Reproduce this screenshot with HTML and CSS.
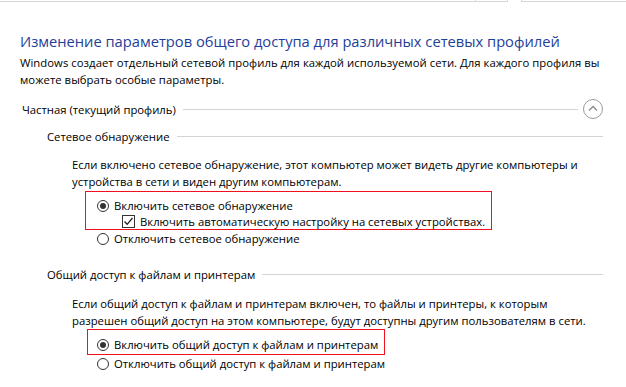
FILE: index.html
```html
<!DOCTYPE html>
<html lang="ru">
<head>
<meta charset="utf-8">
<title>Дополнительные параметры общего доступа</title>
<link rel="stylesheet" href="styles.css">
</head>
<body>
<div class="topbar">
  <div class="address"><span class="address-btn"></span></div>
  <div class="search"></div>
</div>
<main class="content">
  <h1 class="title">Изменение параметров общего доступа для различных сетевых профилей</h1>
  <p class="intro">Windows создает отдельный сетевой профиль для каждой используемой сети. Для каждого профиля вы<br>можете выбрать особые параметры.</p>

  <section class="profile">
    <div class="profile-head">
      <span class="profile-name">Частная (текущий профиль)</span>
      <span class="rule"></span>
      <span class="collapse" aria-label="Свернуть">
        <svg width="20" height="20" viewBox="0 0 20 20"><circle cx="10" cy="10" r="9.5" fill="none" stroke="#9a9a9a" stroke-width="1"/><path d="M6 11.5 L10 7.5 L14 11.5" fill="none" stroke="#8a8a8a" stroke-width="1.3"/></svg>
      </span>
    </div>

    <div class="group">
      <div class="group-head"><span>Сетевое обнаружение</span><span class="rule"></span></div>
      <p class="desc">Если включено сетевое обнаружение, этот компьютер может видеть другие компьютеры и<br>устройства в сети и виден другим компьютерам.</p>
      <div class="options">
        <div class="highlight">
          <div class="opt"><span class="radio checked"></span>Включить сетевое обнаружение</div>
          <div class="opt opt-sub"><span class="check"><svg width="13" height="13" viewBox="0 0 13 13"><path d="M2.5 6.5 L5.2 9.3 L10.5 3" fill="none" stroke="#222" stroke-width="1.3"/></svg></span>Включить автоматическую настройку на сетевых устройствах.</div>
        </div>
        <div class="opt"><span class="radio"></span>Отключить сетевое обнаружение</div>
      </div>
    </div>

    <div class="group group-second">
      <div class="group-head"><span>Общий доступ к файлам и принтерам</span><span class="rule"></span></div>
      <p class="desc">Если общий доступ к файлам и принтерам включен, то файлы и принтеры, к которым<br>разрешен общий доступ на этом компьютере, будут доступны другим пользователям в сети.</p>
      <div class="options">
        <div class="highlight highlight-single">
          <div class="opt"><span class="radio checked"></span>Включить общий доступ к файлам и принтерам</div>
        </div>
        <div class="opt"><span class="radio"></span>Отключить общий доступ к файлам и принтерам</div>
      </div>
    </div>
  </section>
</main>
</body>
</html>
```
FILE: styles.css
```css
html, body {
  margin: 0;
  padding: 0;
  background: #ffffff;
}
body {
  font-family: "Open Sans", "Noto Sans", "Liberation Sans", sans-serif;
  font-size: 11.3px;
  color: #000;
  width: 626px;
  height: 387px;
  overflow: hidden;
}
.topbar {
  display: flex;
  height: 2px;
}
.address {
  width: 508px;
  border-bottom: 1px solid #d6d6d6;
  border-right: 1px solid #d6d6d6;
  position: relative;
  box-sizing: border-box;
  height: 2px;
}
.address-btn {
  position: absolute;
  left: 475px;
  top: 0;
  width: 1px;
  height: 2px;
  background: #d6d6d6;
}
.search {
  margin-left: 13px;
  flex: 1;
  box-sizing: border-box;
  height: 2px;
  border-bottom: 1px solid #d6d6d6;
  border-left: 1px solid #d6d6d6;
}
.content {
  padding: 0 23px 0 20px;
}
.title {
  margin: 29px 0 0 0;
  font-size: 14.7px;
  font-weight: 400;
  line-height: 20px;
  color: #1f3f99;
  white-space: nowrap;
}
.intro {
  margin: 3px 0 0 0;
  line-height: 17px;
  white-space: nowrap;
  letter-spacing: 0.04px;
}
.profile {
  margin-top: 11px;
}
.profile-head {
  display: flex;
  align-items: center;
  height: 20px;
  padding-left: 2px;
}
.rule {
  flex: 1;
  height: 1px;
  background: #d4d4d4;
  margin-left: 7px;
}
.collapse {
  display: flex;
  margin-left: 5px;
}
.group {
  padding-left: 27px;
  margin-top: 9px;
}
.group-second {
  margin-top: 19px;
}
.group-head {
  display: flex;
  align-items: center;
  height: 17px;
  line-height: 17px;
}
.desc {
  margin: 11px 0 0 25px;
  line-height: 17px;
  white-space: nowrap;
}
.options {
  display: flex;
  flex-direction: column;
  align-items: flex-start;
  padding-left: 50px;
  margin-top: 1px;
}
.group-second .desc {
  margin-top: 12px;
}
.group-second .options {
  margin-top: 0;
}
.highlight {
  display: flex;
  flex-direction: column;
  border: 1px solid #f01020;
  margin-left: -12px;
  padding: 5px 6px 0 11px;
}
.highlight .opt-sub {
  height: 15px;
}
.highlight-single {
  padding: 6px 6px 1px 9px;
  margin-left: -10px;
}
.opt {
  display: flex;
  align-items: center;
  height: 17px;
  white-space: nowrap;
}
.opt-sub {
  padding-left: 25px;
}
.radio {
  width: 12px;
  height: 12px;
  box-sizing: border-box;
  border: 1px solid #333;
  border-radius: 50%;
  margin-right: 5px;
  display: flex;
  align-items: center;
  justify-content: center;
  flex: none;
}
.radio.checked::after {
  content: "";
  width: 6px;
  height: 6px;
  border-radius: 50%;
  background: #333;
}
.check {
  width: 13px;
  height: 13px;
  box-sizing: border-box;
  border: 1px solid #333;
  margin-right: 5px;
  display: flex;
  flex: none;
  position: relative;
}
.check svg {
  position: absolute;
  left: -1px;
  top: -1px;
}
```
